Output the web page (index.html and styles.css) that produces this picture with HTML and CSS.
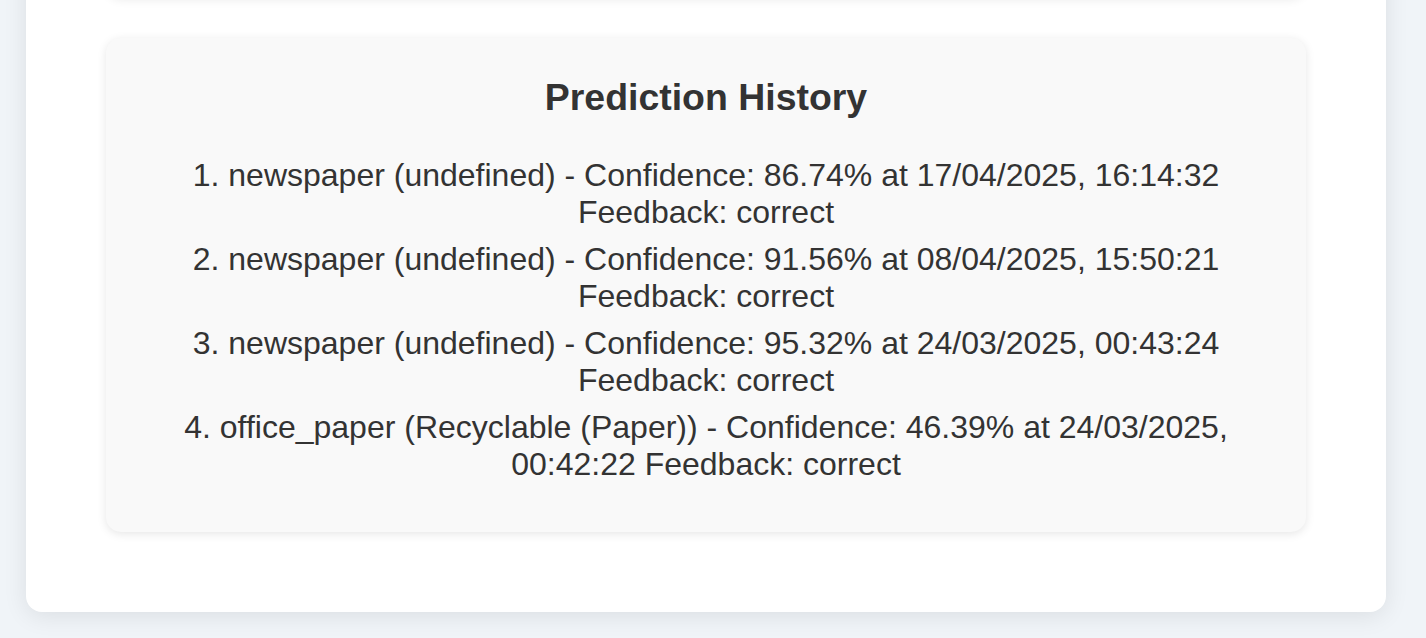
FILE: index.html
```html
<!DOCTYPE html>
<html>
<head>
<meta charset="utf-8">
<link rel="stylesheet" href="styles.css">
</head>
<body>
<div class="card">
  <div class="prev-box"></div>
  <section class="history">
    <h3 class="history-title">Prediction History</h3>
    <ul class="history-list">
      <li>1. newspaper (undefined) - Confidence: 86.74% at 17/04/2025, 16:14:32 Feedback: correct</li>
      <li>2. newspaper (undefined) - Confidence: 91.56% at 08/04/2025, 15:50:21 Feedback: correct</li>
      <li>3. newspaper (undefined) - Confidence: 95.32% at 24/03/2025, 00:43:24 Feedback: correct</li>
      <li>4. office_paper (Recyclable (Paper)) - Confidence: 46.39% at 24/03/2025, 00:42:22 Feedback: correct</li>
    </ul>
  </section>
</div>
</body>
</html>
```
FILE: styles.css
```css
html, body {
  margin: 0;
  padding: 0;
}
body {
  background: #f0f4f8;
  font-family: "Liberation Sans", Arial, sans-serif;
  color: #333;
  height: 638px;
  overflow: hidden;
}
.card {
  background: #fff;
  width: 1360px;
  margin: -40px 0 0 26px;
  padding: 0 80px 80px;
  box-sizing: border-box;
  border-radius: 16px;
  box-shadow: 0 4px 24px rgba(0, 0, 0, 0.09);
}
.prev-box {
  height: 38px;
  background: #f9f9f9;
  border-radius: 15px;
  box-shadow: 0 2px 10px rgba(0, 0, 0, 0.08);
  margin-bottom: 40px;
}
.history {
  background: #f9f9f9;
  border-radius: 15px;
  box-shadow: 0 2px 10px rgba(0, 0, 0, 0.1);
  padding: 38px 40px 39px;
  text-align: center;
}
.history-title {
  margin: 0 0 38px;
  font-size: 37.44px;
  font-weight: bold;
  color: #333;
}
.history-list {
  list-style: none;
  margin: 0;
  padding: 0;
  font-size: 32px;
}
.history-list li {
  margin-bottom: 10px;
}
```
